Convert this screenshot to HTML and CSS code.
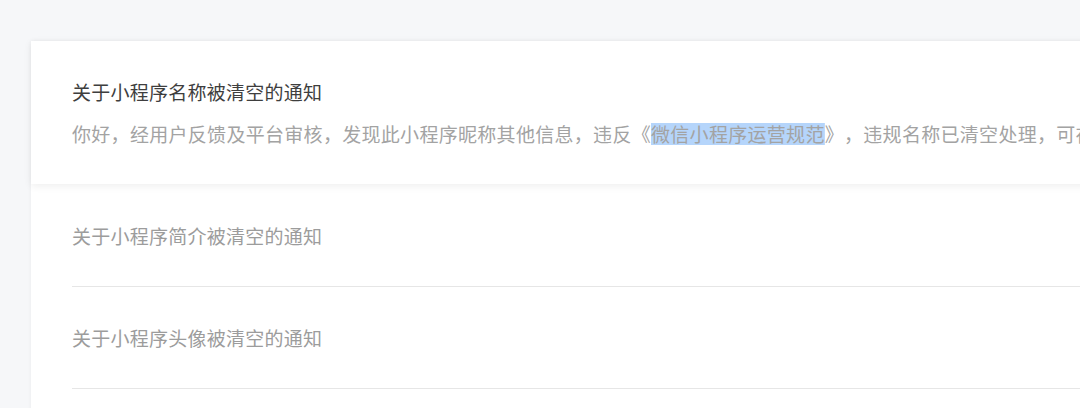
FILE: index.html
```html
<!DOCTYPE html>
<html lang="zh-CN">
<head>
    <meta charset="UTF-8">
    <meta name="viewport" content="width=device-width, initial-scale=1.0">
    <title>通知</title>
    <link rel="stylesheet" href="styles.css">
</head>
<body>

    <div class="notice-list">
        <div class="notice active">
            <h3 class="notice-title">关于小程序名称被清空的通知</h3>
            <p class="notice-body">你好，经用户反馈及平台审核，发现此小程序昵称其他信息，违反《<span class="mark">微信小程序运营规范</span>》，违规名称已清空处理，可在小程序管理后台重新设置名称。</p>
        </div>
        <div class="notice">
            <h3 class="notice-title">关于小程序简介被清空的通知</h3>
        </div>
        <div class="notice">
            <h3 class="notice-title">关于小程序头像被清空的通知</h3>
        </div>
    </div>

</body>
</html>
```

FILE: styles.css
```css
body {
    font-family: "Noto Sans CJK SC", "Noto Sans", sans-serif;
    background: #f6f7f9;
    margin: 0;
    padding: 41px 0 0 31px;
    overflow: hidden;
    text-spacing-trim: space-all;
}

.notice-list {
    width: 1200px;
    padding-bottom: 60px;
    background: #fff;
    box-shadow: 0 0 4px rgba(0, 0, 0, 0.05);
}

.notice {
    padding: 37px 0 0 41px;
}

.notice-title {
    margin: 0;
    font-size: 19px;
    font-weight: 400;
    line-height: 28px;
    letter-spacing: 0.25px;
    color: #9c9c9c;
    padding-bottom: 36px;
    border-bottom: 1px solid #e6e6e6;
    white-space: nowrap;
}

.notice.active {
    position: relative;
    z-index: 1;
    background: #fff;
    padding: 37px 0 36px 41px;
    margin-bottom: 1px;
    box-shadow: 0 2px 8px rgba(0, 0, 0, 0.07);
}

.notice.active .notice-title {
    color: #3e3e3e;
    padding-bottom: 0;
    border-bottom: none;
}

.notice-body {
    margin: 14px 0 0;
    font-size: 19px;
    line-height: 28px;
    letter-spacing: 0.3px;
    color: #a3a3a3;
    white-space: nowrap;
}

.mark {
    background: linear-gradient(#b5d5fb, #b5d5fb) no-repeat center / 100% 22px;
}
```
